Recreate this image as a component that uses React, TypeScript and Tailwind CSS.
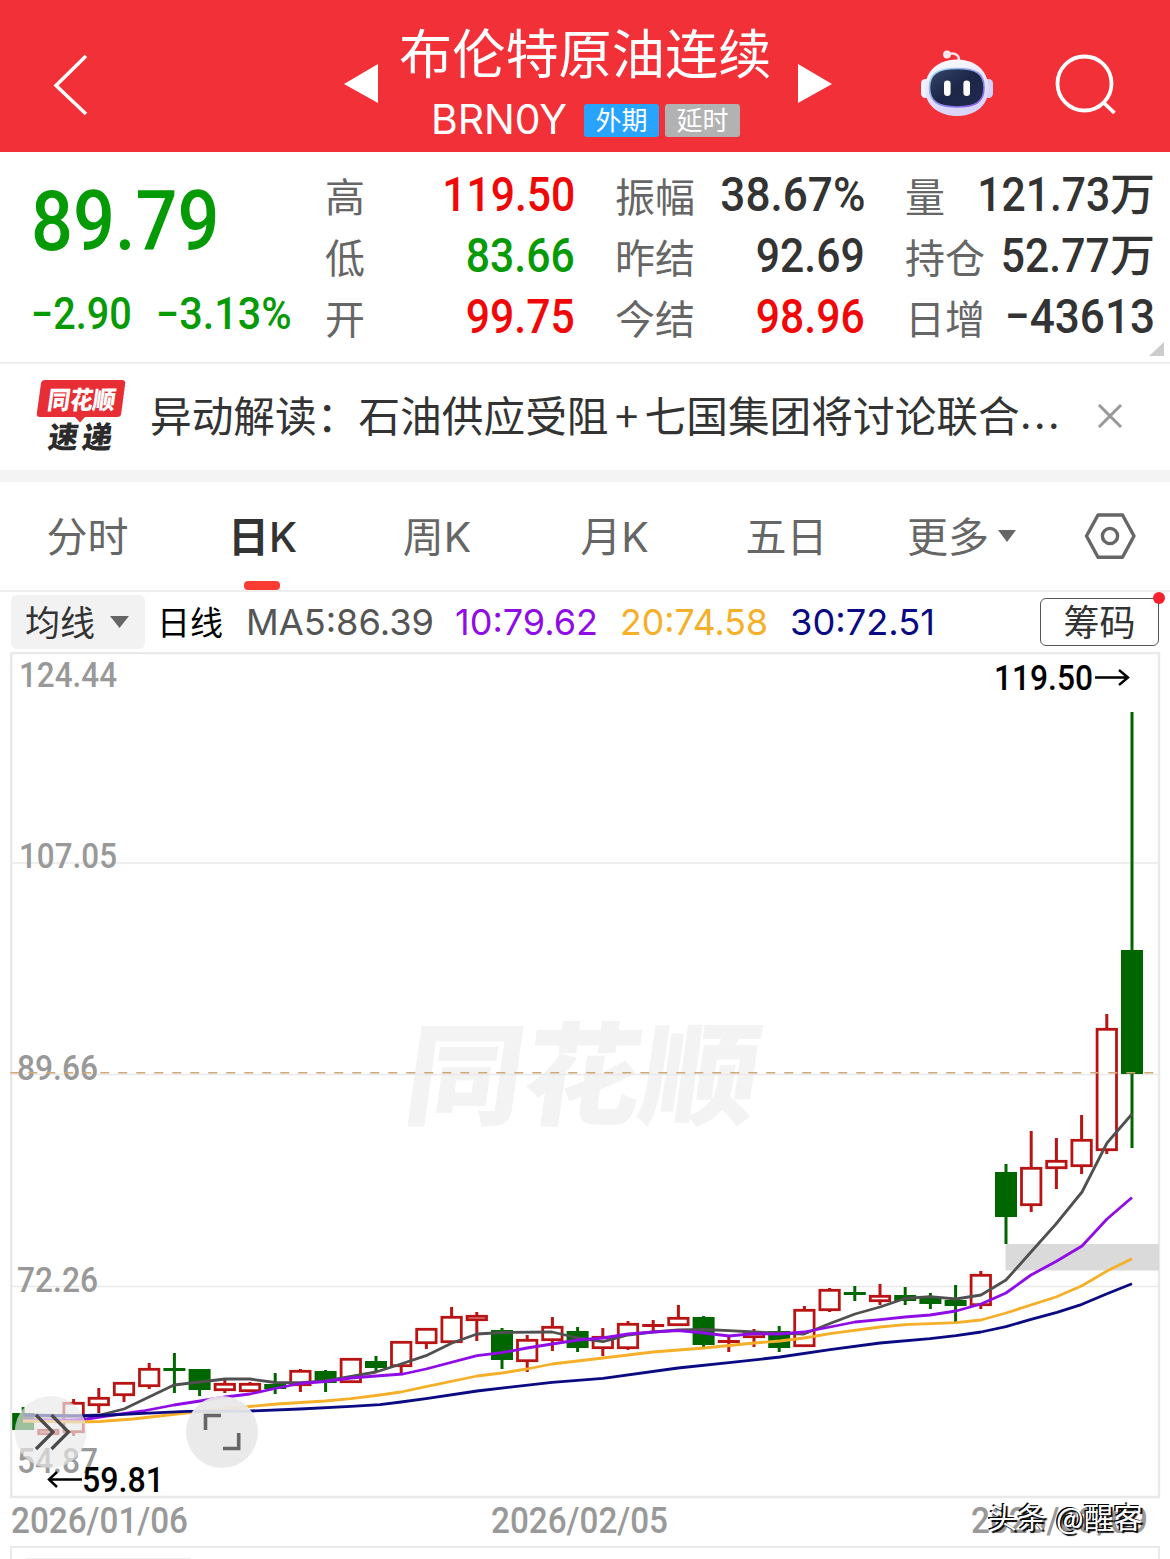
import { clsx } from 'clsx'

type Candle = { up: boolean; high: number; top: number; bottom: number; low: number }
type Point = [number, number]

const CJK = "font-['Noto_Sans_CJK_SC',sans-serif]"
const DIN = "font-['Roboto','Noto_Sans_CJK_SC',sans-serif] font-medium"
const UI = "font-['Inter','Noto_Sans_CJK_SC',sans-serif]"

const quoteColumns = [
  [
    { label: '高', value: '119.50', color: 'text-[#f00808]' },
    { label: '低', value: '83.66', color: 'text-[#069a06]' },
    { label: '开', value: '99.75', color: 'text-[#f00808]' },
  ],
  [
    { label: '振幅', value: '38.67%', color: 'text-[#333]', wide: true },
    { label: '昨结', value: '92.69', color: 'text-[#333]' },
    { label: '今结', value: '98.96', color: 'text-[#f00808]' },
  ],
  [
    { label: '量', value: '121.73', unit: '万', color: 'text-[#333]' },
    { label: '持仓', value: '52.77', unit: '万', color: 'text-[#333]' },
    { label: '日增', value: '−43613', color: 'text-[#333]', wide: true },
  ],
]

const tabs = [
  { label: '分时', latin: '', width: 'w-[175px]' },
  { label: '日', latin: 'K', width: 'w-[175px]', active: true },
  { label: '周', latin: 'K', width: 'w-[174px]' },
  { label: '月', latin: 'K', width: 'w-[181px]' },
  { label: '五日', latin: '', width: 'w-[163px]' },
]

const averages = [
  { text: 'MA5:86.39', color: 'fill-[#555]', x: 246, width: 188 },
  { text: '10:79.62', color: 'fill-[#8f0ce6]', x: 455, width: 143 },
  { text: '20:74.58', color: 'fill-[#f5af28]', x: 620, width: 148 },
  { text: '30:72.51', color: 'fill-[#0a0a82]', x: 790, width: 145 },
]

// up?, high, body top, body bottom, low (svg y units)
const candles: Candle[] = (
  [
    [0, 1407, 1413, 1430, 1430],
    [1, 1429, 1429, 1435, 1435],
    [1, 1399, 1402, 1433, 1436],
    [1, 1388, 1397, 1406, 1413],
    [1, 1382, 1382, 1396, 1402],
    [1, 1363, 1368, 1387, 1389],
    [0, 1353, 1368, 1371, 1393],
    [0, 1369, 1369, 1390, 1396],
    [1, 1380, 1383, 1391, 1393],
    [1, 1382, 1383, 1392, 1392],
    [0, 1373, 1384, 1389, 1394],
    [1, 1369, 1370, 1386, 1392],
    [0, 1370, 1371, 1383, 1392],
    [1, 1358, 1358, 1383, 1383],
    [0, 1356, 1361, 1368, 1371],
    [1, 1341, 1341, 1367, 1373],
    [1, 1328, 1328, 1344, 1349],
    [1, 1307, 1316, 1343, 1343],
    [1, 1312, 1315, 1321, 1341],
    [0, 1328, 1330, 1360, 1369],
    [1, 1335, 1339, 1362, 1372],
    [1, 1317, 1326, 1341, 1351],
    [0, 1327, 1331, 1348, 1352],
    [1, 1328, 1336, 1349, 1356],
    [1, 1321, 1323, 1349, 1350],
    [1, 1320, 1324, 1327, 1331],
    [1, 1305, 1317, 1326, 1326],
    [0, 1316, 1317, 1345, 1348],
    [1, 1337, 1340, 1343, 1352],
    [1, 1329, 1332, 1338, 1347],
    [0, 1326, 1331, 1348, 1352],
    [1, 1306, 1309, 1347, 1347],
    [1, 1288, 1289, 1311, 1312],
    [0, 1286, 1292, 1295, 1301],
    [1, 1284, 1295, 1302, 1305],
    [0, 1287, 1295, 1301, 1305],
    [0, 1293, 1297, 1304, 1309],
    [0, 1285, 1300, 1306, 1324],
    [1, 1271, 1274, 1306, 1309],
    [0, 1164, 1172, 1217, 1244],
    [1, 1131, 1167, 1206, 1212],
    [1, 1138, 1160, 1169, 1189],
    [1, 1115, 1139, 1167, 1174],
    [1, 1014, 1028, 1151, 1154],
    [0, 712, 950, 1074, 1148],
  ] as number[][]
).map(([up, high, top, bottom, low]) => ({ up: up === 1, high, top, bottom, low }))

const ma5: Point[] = [
  [23, 1416], [73, 1416], [100, 1415], [124, 1409], [149, 1397], [174, 1385], [200, 1382], [225, 1379], [250, 1379],
  [275, 1382.5], [300, 1382.7], [325, 1381], [351, 1376.5], [376, 1372], [401, 1364], [426, 1355.7], [452, 1343],
  [477, 1334], [502, 1332.5], [552, 1332], [578, 1338], [603, 1341.7], [628, 1335], [653, 1332], [678, 1330],
  [704, 1329.5], [729, 1330.7], [754, 1332], [779, 1333], [804, 1334], [830, 1323.5], [855, 1314], [880, 1307],
  [905, 1298.5], [930, 1296.7], [956, 1299], [981, 1295], [1006, 1280], [1031, 1252], [1056, 1224], [1082, 1192],
  [1107, 1143], [1132, 1114],
]

const ma10: Point[] = [
  [23, 1420], [73, 1420], [87, 1419], [110, 1415.5], [143, 1411], [174, 1405], [200, 1401], [225, 1397], [250, 1394],
  [275, 1388.5], [300, 1383.5], [325, 1381.5], [351, 1378], [376, 1376], [403, 1374], [426, 1369], [477, 1355.7],
  [502, 1352.7], [527, 1348], [552, 1344], [578, 1340], [603, 1338], [628, 1334], [653, 1332], [678, 1330.7],
  [704, 1333], [729, 1336], [754, 1333.7], [779, 1334], [804, 1332], [830, 1327], [855, 1322], [880, 1319.7],
  [905, 1317], [930, 1315], [956, 1311], [981, 1304], [1006, 1293], [1031, 1275], [1056, 1261.5], [1082, 1246],
  [1107, 1219], [1132, 1197.5],
]

const ma20: Point[] = [
  [23, 1421], [80, 1422], [100, 1421.5], [133, 1419], [177, 1414], [220, 1409], [250, 1406.5], [277, 1404], [325, 1401],
  [351, 1398.7], [380, 1395], [401, 1392], [426, 1386.7], [477, 1376], [502, 1373], [527, 1369], [552, 1364],
  [603, 1358], [653, 1352], [704, 1348], [754, 1343], [780, 1341], [804, 1338], [830, 1333.7], [880, 1327],
  [905, 1324.7], [956, 1322.7], [981, 1320], [1006, 1313], [1056, 1297], [1082, 1285.7], [1107, 1271], [1132, 1258.7],
]

const ma30: Point[] = [
  [23, 1415], [83, 1416], [110, 1415], [143, 1413.3], [187, 1411.3], [250, 1411], [300, 1409], [351, 1406.3],
  [380, 1404.7], [401, 1402], [426, 1398.7], [477, 1391], [552, 1382.3], [603, 1378.3], [678, 1368], [729, 1362.7],
  [780, 1357], [830, 1349.7], [880, 1343], [930, 1338.7], [956, 1335.7], [981, 1332], [1006, 1326.7], [1031, 1319.3],
  [1057, 1312.3], [1082, 1304.3], [1107, 1293.7], [1132, 1283.7],
]

const axisLabels = [
  { text: '124.44', x: 19, y: 687, width: 98 },
  { text: '107.05', x: 19, y: 868, width: 98 },
  { text: '89.66', x: 17, y: 1079.5, width: 81 },
  { text: '72.26', x: 17, y: 1291.5, width: 81 },
  { text: '54.87', x: 17, y: 1473, width: 81 },
]

const toPoints = (points: Point[]) => points.map((p) => p.join(',')).join(' ')

function RobotIcon() {
  return (
    <svg className="h-[70px] w-[76px]" viewBox="919 48 76 70">
      <defs>
        <linearGradient id="shell" x1="0" y1="0" x2="0.3" y2="1">
          <stop offset="0" stopColor="#ffffff" />
          <stop offset="0.6" stopColor="#e4e2fb" />
          <stop offset="1" stopColor="#d9d4fa" />
        </linearGradient>
        <linearGradient id="visor" x1="0" y1="0" x2="1" y2="1">
          <stop offset="0" stopColor="#35466b" />
          <stop offset="0.5" stopColor="#1c2647" />
          <stop offset="1" stopColor="#202a50" />
        </linearGradient>
        <linearGradient id="rim" x1="0" y1="0" x2="1" y2="1">
          <stop offset="0" stopColor="#9fe0f0" />
          <stop offset="0.5" stopColor="#8f93ee" />
          <stop offset="1" stopColor="#8452e0" />
        </linearGradient>
      </defs>
      <path d="M948 54.5c5-2 11-1 11 6" fill="none" stroke="#f6dfe6" strokeWidth="2.6" />
      <circle cx="947" cy="54.5" r="3.9" fill="#fbe9ee" />
      <rect x="921" y="79" width="9" height="19" rx="4.5" fill="#f1f0ff" />
      <rect x="984" y="79" width="9" height="19" rx="4.5" fill="#d6d1f8" />
      <path
        d="M957 59.5c18 0 31.5 11 31.5 29 0 17-13.5 27.5-31.5 27.5s-32-10.5-32-27.5c0-18 14-29 32-29z"
        fill="url(#shell)"
      />
      <path
        d="M957 68.5c19 0 27 5 27 19s-8 19.5-27 19.5-27.500-5.5-27.500-19.5 8.500-19 27.500-19z"
        fill="url(#visor)"
        stroke="url(#rim)"
        strokeWidth="1.6"
      />
      <rect x="944" y="80.5" width="6.6" height="15.5" rx="3.3" fill="#fff" />
      <rect x="963.4" y="80.5" width="6.6" height="15.5" rx="3.3" fill="#fff" />
    </svg>
  )
}

function Header() {
  return (
    <header className="flex h-[152px] items-start bg-[#f23038] text-white">
      <svg className="ml-[50px] mt-[50px] h-[70px] w-10" viewBox="50 50 40 70" fill="none">
        <path d="M86 56 56 85.5l30 28.5" stroke="#fff" strokeWidth="3.5" />
      </svg>
      <svg className="ml-[254px] mt-16 h-10 w-[34px]" viewBox="0 0 34 40">
        <path d="M0 20 34 0v39z" fill="#fff" />
      </svg>
      <div className="ml-[21px] w-[374px]">
        <h1 className={clsx(CJK, 'mt-[21px] h-[60px] whitespace-nowrap text-[53.2px] leading-[60px]')}>布伦特原油连续</h1>
        <div className="mt-[15px] flex h-[48px] items-center pl-[30px]">
          <span className="w-[155px]">
            <svg className="block h-[48px] w-[155px]" viewBox="0 0 155 48">
              <text x="2" y="38" textLength="136" lengthAdjust="spacingAndGlyphs" className={clsx(UI, 'fill-white text-[41px]')}>
                BRN0Y
              </text>
            </svg>
          </span>
          <span className={clsx(CJK, 'h-[33px] w-[75px] rounded-[3px] bg-[#28a4ff] text-center text-[26px] leading-[30px]')}>外期</span>
          <span className={clsx(CJK, 'ml-1.5 h-[33px] w-[75px] shrink-0 rounded-[3px] bg-[#b2b2b2] text-center text-[26px] leading-[30px]')}>
            延时
          </span>
        </div>
      </div>
      <svg className="ml-[25px] mt-16 h-10 w-[34px]" viewBox="0 0 34 40">
        <path d="M34 20 0 0v39z" fill="#fff" />
      </svg>
      <div className="ml-[87px] mt-12">
        <RobotIcon />
      </div>
      <svg className="ml-[59px] mt-[52px] h-16 w-16" viewBox="1054 52 64 64" fill="none" stroke="#fff" strokeWidth="3.8">
        <circle cx="1084.5" cy="83.5" r="27" />
        <path d="m1103.5 102.5 11 10.5" />
      </svg>
    </header>
  )
}

function Quote() {
  return (
    <section className="relative flex h-[212px] border-b-2 border-[#eee]">
      <div className={clsx(DIN, 'w-[325px] shrink-0 pl-[31px] text-[#069a06]')}>
        <div className="mt-7 h-[84px] origin-left scale-x-[0.89] text-[83px] leading-[84px]">89.79</div>
        <div className="mt-[26px] flex h-[50px] text-[43.5px] leading-[50px]">
          <span className="w-[125px] origin-left scale-x-[0.91]">−2.90</span>
          <span className="origin-left scale-x-[0.95]">−3.13%</span>
        </div>
      </div>
      <div className="mt-3 flex gap-10">
        {quoteColumns.map((rows) => (
          <div key={rows[0].label} className="w-[250px]">
            {rows.map((row) => (
              <div key={row.label} className="flex h-[61px] items-center whitespace-nowrap">
                <span className={clsx(CJK, 'mr-auto text-[40px] leading-[58px] text-[#666]')}>{row.label}</span>
                <span
                  className={clsx(
                    DIN,
                    'origin-right text-[48.5px] leading-[58px]',
                    row.wide ? 'scale-x-[0.91]' : 'scale-x-[0.88]',
                    row.color,
                  )}
                >
                  {row.value}
                </span>
                {row.unit && (
                  <span className={clsx(CJK, 'w-[45px] pb-[5px] text-[45px] font-medium leading-[54px] text-[#333]')}>{row.unit}</span>
                )}
              </div>
            ))}
          </div>
        ))}
      </div>
      <svg className="absolute right-1.5 top-[190px] h-3.5 w-[15px]" viewBox="0 0 15 14">
        <path d="M15 0v14H0z" fill="#ccc" />
      </svg>
    </section>
  )
}

function News() {
  return (
    <section className="flex h-[118px] items-start border-b-[12px] border-[#f4f4f4]">
      <svg className="ml-9 mt-2 h-[94px] w-[91px]" viewBox="36 372 91 94">
        <path
          d="M45 380h77q3.5 0 3.2 3.5l-4 30q-.4 3.5-4 3.5H85l-5 5.5-5-5.5H40q-3.5 0-3.2-3.5l4.2-30q.5-3.5 4-3.5z"
          fill="#e62e34"
        />
        <text
          transform="translate(46.5 409) skewX(-8)"
          textLength="68"
          lengthAdjust="spacingAndGlyphs"
          className={clsx(CJK, 'fill-white text-[25px] font-black')}
        >
          同花顺
        </text>
        <text transform="translate(47 448) skewX(-8)" className={clsx(CJK, 'fill-[#2b2b2b] text-[30px] font-black')}>
          <tspan>速</tspan>
          <tspan x="34">递</tspan>
        </text>
      </svg>
      <p className={clsx(CJK, 'ml-[23px] mt-5 flex w-[928px] whitespace-nowrap text-[41.7px] leading-[60px] text-[#333]')}>
        <span>异动解读：石油供应受阻</span>
        <span className="w-[36px] text-center">+</span>
        <span>七国集团将讨论联合</span>
        <span className={clsx(UI, 'tracking-[2px]')}>...</span>
      </p>
      <svg className="ml-[19px] mt-10 h-6 w-[26px]" viewBox="0 0 26 24" fill="none" stroke="#999" strokeWidth="3">
        <path d="m2 1 22 22M24 1 2 23" />
      </svg>
    </section>
  )
}

function Tabs() {
  return (
    <nav className="flex h-[110px] border-b-2 border-[#eee] text-[41px] leading-[56px] text-[#666]">
      {tabs.map((tab) => (
        <button
          key={tab.label}
          className={clsx(
            CJK,
            tab.width,
            'flex h-[108px] shrink-0 flex-col items-center whitespace-nowrap pt-6',
            tab.active && 'font-bold text-[#333]',
          )}
        >
          <span>
            {tab.label}
            <span className={clsx(UI, tab.active && 'font-medium')}>{tab.latin}</span>
          </span>
          {tab.active && <span className="mr-0.5 mt-auto h-[9px] w-9 shrink-0 rounded-[4px] bg-[#fa3c32]" />}
        </button>
      ))}
      <button className={clsx(CJK, 'ml-[39px] flex h-[108px] items-start pt-6')}>
        更多
        <svg className="ml-[9px] mt-6 h-3 w-[18px]" viewBox="0 0 18 12">
          <path d="M0 0h18L9 12z" fill="#666" />
        </svg>
      </button>
      <svg className="ml-[67px] mt-[28px] h-[52px] w-[54px]" viewBox="1083 510 54 52" fill="none" stroke="#666" strokeWidth="3.4">
        <path d="M1098 515h24.5l11.5 21-11.5 21.300H1098L1086.5 536z" strokeLinejoin="round" />
        <circle cx="1110" cy="536" r="7.6" />
      </svg>
    </nav>
  )
}

function AverageBar() {
  return (
    <div className="flex h-[60px] items-start">
      <button className={clsx(CJK, 'ml-[11px] mt-[3px] flex h-[54px] w-[134px] items-center rounded-md bg-[#f2f2f2] pl-3.5 text-[35px] text-[#333]')}>
        <span className="pb-[3px] leading-[50px]">均线</span>
        <svg className="ml-[15px] h-3 w-[19px]" viewBox="0 0 19 12">
          <path d="M0 0h19L9.5 12z" fill="#666" />
        </svg>
      </button>
      <span className={clsx(CJK, 'ml-3 mt-0.5 text-[33px] leading-[54px] text-black')}>日线</span>
      <svg className="ml-[15px] h-[60px] w-[710px]" viewBox="238 592 710 60">
        {averages.map((item) => (
          <text
            key={item.text}
            x={item.x}
            y="635"
            textLength={item.width}
            lengthAdjust="spacingAndGlyphs"
            className={clsx(UI, 'text-[36px]', item.color)}
          >
            {item.text}
          </text>
        ))}
      </svg>
      <button className={clsx(CJK, 'relative ml-auto mr-[11px] mt-1.5 h-[48px] w-[119px] rounded-md border-[1.5px] border-[#555] pb-1 text-[36px] leading-[40px] text-[#333]')}>
        筹码
        <span className="absolute -right-[7px] -top-[7px] size-3 rounded-full bg-[#f5222d]" />
      </button>
    </div>
  )
}

function CandleShape({ candle, x }: { candle: Candle; x: number }) {
  const { up, high, top, bottom, low } = candle
  if (!up) {
    return (
      <g fill="#006600">
        <rect x={x - 1.5} y={high} width="3" height={low - high} />
        <rect x={x - 11} y={top} width="22" height={bottom - top} />
      </g>
    )
  }
  const height = bottom - top
  return (
    <g fill="#b81414">
      <rect x={x - 1.5} y={high} width="3" height={top - high} />
      <rect x={x - 1.5} y={bottom} width="3" height={low - bottom} />
      {height <= 4 ? (
        <rect x={x - 11} y={top} width="22" height={height} />
      ) : (
        <rect x={x - 9.7} y={top + 1.3} width="19.4" height={height - 2.6} fill="none" stroke="#b81414" strokeWidth="2.8" />
      )}
    </g>
  )
}

function Chart() {
  return (
    <svg className="block h-[848px] w-full" viewBox="0 652 1170 848">
      <text
        transform="translate(401 1116) skewX(-8)"
        textLength="353"
        lengthAdjust="spacingAndGlyphs"
        className={clsx(CJK, 'fill-[#f3f3f3] text-[111px] font-black')}
      >
        同花顺
      </text>
      <g stroke="#e9e9e9">
        {[863, 1074.5, 1286.5].map((y) => (
          <line key={y} x1="11" x2="1159" y1={y} y2={y} strokeWidth="1.5" />
        ))}
        <rect x="11.2" y="653" width="1147.8" height="844" fill="none" strokeWidth="2.5" />
      </g>
      <rect x="1005.5" y="1244" width="153.5" height="26.5" fill="#dadada" />

      {axisLabels.map((label) => (
        <text
          key={label.text}
          x={label.x}
          y={label.y}
          textLength={label.width}
          lengthAdjust="spacingAndGlyphs"
          className={clsx(DIN, 'fill-[#999] text-[35px]')}
        >
          {label.text}
        </text>
      ))}

      {candles.map((candle, i) => (
        <CandleShape key={i} candle={candle} x={23.2 + i * 25.2} />
      ))}
      <line x1="10.3" x2="1156" y1="1072.7" y2="1072.7" stroke="#cfa878" strokeWidth="1.6" strokeDasharray="9 9" />

      <g fill="none" strokeWidth="2.8" strokeLinejoin="round">
        <polyline points={toPoints(ma5)} stroke="#505050" />
        <polyline points={toPoints(ma10)} stroke="#8f0ce6" />
        <polyline points={toPoints(ma20)} stroke="#f5af28" />
        <polyline points={toPoints(ma30)} stroke="#0a0a82" />
      </g>

      {/* expand / fullscreen buttons */}
      <circle cx="50.7" cy="1432" r="36" fill="#e9e9e9" fillOpacity="0.68" />
      <path d="m36 1415 17 17-17 17M51.5 1415l17 17-17 17" fill="none" stroke="#4a4a4a" strokeWidth="3.2" />
      <circle cx="222" cy="1432" r="36" fill="#e9e9e9" fillOpacity="0.94" />
      <path d="M205.5 1430v-14.5H221M238.7 1433v15.5H223" fill="none" stroke="#666" strokeWidth="3.6" />

      {/* period high and low */}
      <g className={clsx(DIN, 'fill-black text-[35px]')}>
        <text x="994" y="690" textLength="99" lengthAdjust="spacingAndGlyphs">
          119.50
        </text>
        <text x="82" y="1492" textLength="82" lengthAdjust="spacingAndGlyphs">
          59.81
        </text>
      </g>
      <g fill="none" stroke="#000" strokeWidth="2.4">
        <path d="M1095 677.5h32M1119 670l9 7.5-9 7.5" />
        <path d="M82 1479.5H49M57 1472l-8 7.5 8 7.5" />
      </g>
    </svg>
  )
}

function DateAxis() {
  return (
    <div className="relative h-[46px]">
      <svg className="block h-[46px] w-full" viewBox="0 1500 1170 46">
        {[
          { text: '2026/01/06', x: 11 },
          { text: '2026/02/05', x: 491 },
          { text: '2026/03/09', x: 971 },
        ].map((date) => (
          <text
            key={date.text}
            x={date.x}
            y="1532.5"
            textLength="177"
            lengthAdjust="spacingAndGlyphs"
            className={clsx(DIN, 'fill-[#999] text-[36px]')}
          >
            {date.text}
          </text>
        ))}
      </svg>
      <div
        className={clsx(
          CJK,
          'absolute right-[27px] top-[-5px] whitespace-nowrap text-[29px] leading-[42px] tracking-[0.5px] text-white [text-shadow:-1.5px_-1px_0_#000,2px_1.5px_1px_#000] [word-spacing:2px]',
        )}
      >
        头条 @醒客
      </div>
    </div>
  )
}

export default function App() {
  return (
    <div className="h-[1559px] w-[1170px] overflow-hidden bg-white">
      <Header />
      <Quote />
      <News />
      <Tabs />
      <AverageBar />
      <Chart />
      <DateAxis />
      <div className="ml-2.5 mr-2.5 h-[13px] border-x-2 border-t-2 border-[#e9e9e9] pl-3.5 pt-2.5">
        <div className="h-1 w-[165px] bg-[#f0f0f0]" />
      </div>
    </div>
  )
}
